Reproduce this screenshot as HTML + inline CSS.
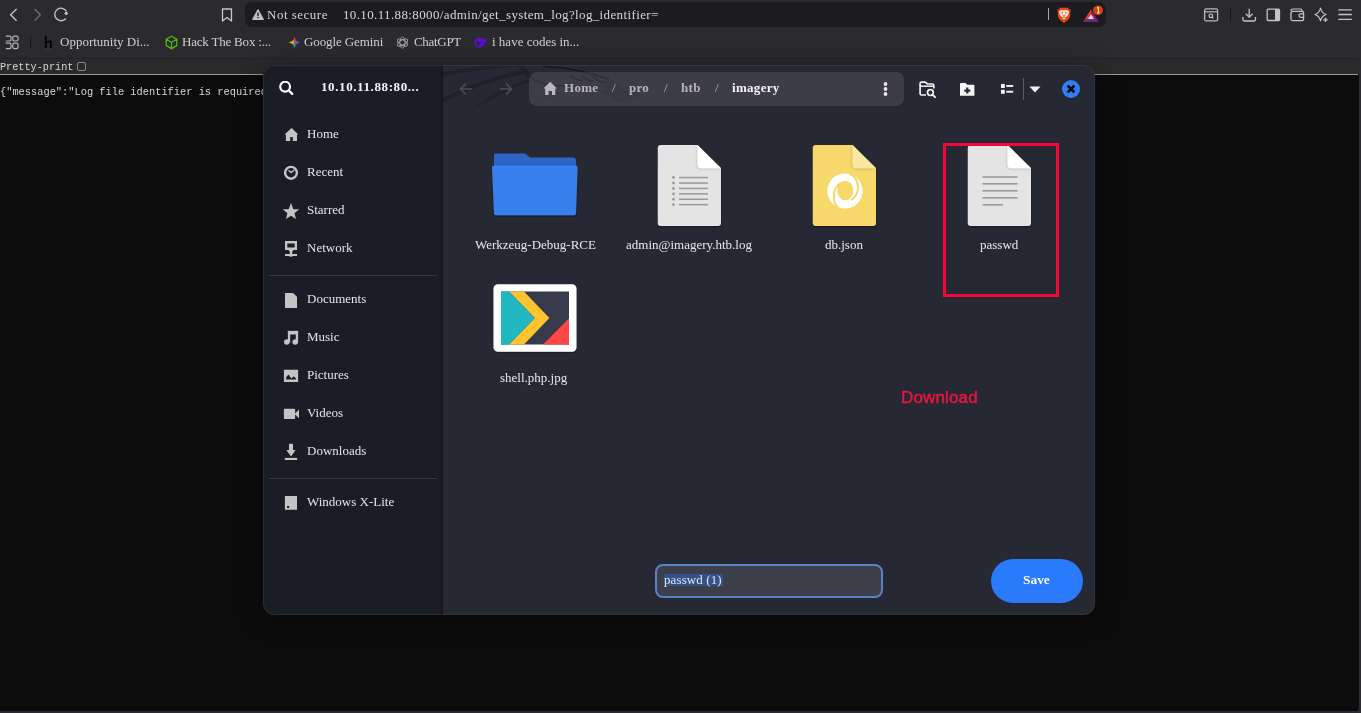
<!DOCTYPE html>
<html><head><meta charset="utf-8">
<style>
*{margin:0;padding:0;box-sizing:border-box}
body{-webkit-font-smoothing:antialiased}
.a{will-change:transform}
html,body{width:1361px;height:713px;overflow:hidden;background:#2b2a2f;font-family:"Liberation Serif",serif}
.a{position:absolute;white-space:nowrap}
#chrome{position:absolute;left:0;top:0;width:1361px;height:58px;background:#2b2a2f}
#url{position:absolute;left:245px;top:2px;width:861px;height:25px;background:#1c1b1f;border-radius:7px}
.t{color:#d4d4d6;font-size:13px;line-height:1}
#page{position:absolute;left:0;top:58px;width:1359px;height:653px;background:#0c0c0c;border-radius:0 3px 3px 0}
#pp{position:absolute;left:0;top:58px;width:1359px;height:16px;background:#2a2a2a;border-top:1px solid #232227;border-radius:0 3px 0 0}
#ppline{position:absolute;left:0;top:74px;width:1358px;height:1px;background:#9a9a9a}
.bm{color:#d0d0d2}
.mono{font-family:"Liberation Mono",monospace;color:#e6e6e6}
#dlg{position:absolute;left:263px;top:65px;width:832px;height:550px;border-radius:12px;overflow:hidden;background:#262833;box-shadow:0 2px 24px rgba(0,0,0,0.35)}
#dlgb{position:absolute;left:263px;top:65px;width:832px;height:550px;border-radius:12px;box-shadow:inset 0 0 0 1px rgba(255,255,255,0.07);pointer-events:none}
#side{position:absolute;left:0;top:0;width:180px;height:550px;background:#1a1d25}
.si{color:#e4e4e6;font-size:13px}
.bc{font-size:13px;font-weight:700;color:#b5b5ba;line-height:13px;letter-spacing:0.3px}
.fl{color:#e8e8ea;font-size:13px;line-height:13px}
</style></head><body>
<div id="chrome">
  <!-- nav icons -->
  <svg class="a" style="left:0;top:0" width="80" height="30" viewBox="0 0 80 30">
    <path d="M16.6 8.9 L10.6 14.8 L16.6 20.8" fill="none" stroke="#c6c6ca" stroke-width="1.35"/>
    <path d="M34.5 8.9 L40.4 14.8 L34.5 20.8" fill="none" stroke="#6c6c70" stroke-width="1.35"/>
    <path d="M65.9 18.5 A6.3 6.3 0 1 1 66.5 11.3" fill="none" stroke="#c6c6ca" stroke-width="1.3"/>
    <circle cx="66.2" cy="13.3" r="1.6" fill="#c6c6ca"/>
  </svg>
  <svg class="a" style="left:221px;top:8px" width="12" height="14" viewBox="0 0 12 14">
    <path d="M1.5 1 H10.5 V13 L6 9.5 L1.5 13 Z" fill="none" stroke="#c8c8cc" stroke-width="1.3" stroke-linejoin="round"/>
  </svg>
  <div id="url"></div>
  <svg class="a" style="left:252px;top:9px" width="12" height="11" viewBox="0 0 12 11">
    <path d="M6 0.5 L11.5 10.5 H0.5 Z" fill="#c0c0c4" stroke="#c0c0c4" stroke-linejoin="round"/>
    <rect x="5.3" y="3.5" width="1.4" height="3.6" fill="#1c1b1f"/><rect x="5.3" y="8" width="1.4" height="1.3" fill="#1c1b1f"/>
  </svg>
  <div class="a t" style="left:267px;top:8px;letter-spacing:0.5px">Not secure</div>
  <div class="a t" style="left:343px;top:8px;color:#d8d8da;letter-spacing:0.37px">10.10.11.88:8000/admin/get_system_log?log_identifier=</div>

  <div class="a" style="left:1048px;top:8px;width:1px;height:12px;background:#a8a8ac"></div>
  <svg class="a" style="left:1054px;top:5px" width="20" height="20" viewBox="1054 5 20 20">
    <path d="M1060.2 7.8 H1067.8 L1069.2 9.2 L1070.6 9.6 L1070 16.5 Q1069.6 18.6 1067.5 20.3 L1064 23 L1060.5 20.3 Q1058.4 18.6 1058 16.5 L1057.5 9.6 L1058.8 9.2 Z" fill="#e8470e"/>
    <path d="M1059 11.5 L1060.8 10.3 H1067.2 L1069.1 11.5 L1068.6 13.6 L1067.6 15.6 L1066.2 17.3 H1061.8 L1060.4 15.6 L1059.4 13.6 Z" fill="#ebe6e4"/>
    <ellipse cx="1064" cy="18.5" rx="1.6" ry="0.8" fill="#ebe6e4"/>
    <circle cx="1062.3" cy="12.6" r="0.9" fill="#e06a3a"/><circle cx="1065.8" cy="12.6" r="0.9" fill="#e06a3a"/>
    <path d="M1062.8 14.6 L1064 16.6 L1065.2 14.6" fill="none" stroke="#e06a3a" stroke-width="1"/>
  </svg>
  <svg class="a" style="left:1083px;top:9px" width="16" height="13" viewBox="0 0 16 13">
    <path d="M8 0.5 L15.5 12.5 H0.5 Z" fill="#9e1f63"/>
    <path d="M8 0.5 L0.5 12.5 H4 L8 5 Z" fill="#e0431d"/>
    <path d="M0.5 12.5 H15.5 L14 10 H2 Z" fill="#662d91"/>
    <path d="M8 5.2 L11 10 H5 Z" fill="#dcdcdc"/>
  </svg>
  <svg class="a" style="left:1093px;top:5px" width="10" height="11" viewBox="0 0 10 11">
    <circle cx="5" cy="5.3" r="4.9" fill="#d8440e"/>
    <path d="M4 3 L5.4 2.4 V8 M4 8 H6.6" stroke="#f4e4dc" stroke-width="1.1" fill="none"/>
  </svg>
  <svg class="a" style="left:1203px;top:8px" width="16" height="14" viewBox="0 0 16 14">
    <rect x="1.6" y="0.9" width="13" height="12" rx="1.5" fill="none" stroke="#b8b8bc" stroke-width="1.3"/>
    <path d="M1.6 3.8 H14.6" stroke="#b8b8bc" stroke-width="1.2"/>
    <circle cx="7.8" cy="7.8" r="1.8" fill="none" stroke="#d0d0d4" stroke-width="1.1"/>
    <path d="M9.1 9.1 L10.4 10.4" stroke="#d0d0d4" stroke-width="1.2"/>
  </svg>
  <div class="a" style="left:1230px;top:9px;width:1px;height:12px;background:#18171a"></div>
  <svg class="a" style="left:1242px;top:8px" width="15" height="14" viewBox="0 0 15 14">
    <path d="M7.2 0.8 V9 M3.8 5.8 L7.2 9.2 L10.6 5.8" fill="none" stroke="#c4c4c8" stroke-width="1.3"/>
    <path d="M0.9 9 V11.5 Q0.9 13 2.4 13 H12 Q13.5 13 13.5 11.5 V9" fill="none" stroke="#c4c4c8" stroke-width="1.3"/>
  </svg>
  <svg class="a" style="left:1266px;top:8px" width="15" height="14" viewBox="0 0 15 14">
    <rect x="1.2" y="1.2" width="12.3" height="11.3" rx="1" fill="none" stroke="#c4c4c8" stroke-width="1.3"/>
    <rect x="9" y="1.2" width="4.5" height="11.3" fill="#c4c4c8"/>
  </svg>
  <svg class="a" style="left:1290px;top:8px" width="15" height="14" viewBox="0 0 15 14">
    <path d="M1 3 Q1 1 3 1 H10.5 Q12 1 12 2.5 V3.5" fill="none" stroke="#c4c4c8" stroke-width="1.2"/>
    <rect x="1" y="3.3" width="12.6" height="9.3" rx="1.6" fill="none" stroke="#c4c4c8" stroke-width="1.3"/>
    <path d="M13.6 5.8 H10.6 Q9 5.8 9 7.6 Q9 9.4 10.6 9.4 H13.6" fill="none" stroke="#c4c4c8" stroke-width="1.2"/>
  </svg>
  <svg class="a" style="left:1314px;top:7px" width="15" height="16" viewBox="0 0 15 16">
    <path d="M6.5 1 Q7.5 6 12 7.5 Q7.5 9 6.5 14 Q5.5 9 1 7.5 Q5.5 6 6.5 1 Z" fill="none" stroke="#c4c4c8" stroke-width="1.2" stroke-linejoin="round"/>
    <path d="M11.5 10.5 V15 M9.3 12.8 H13.7" stroke="#c4c4c8" stroke-width="1.3"/>
  </svg>
  <svg class="a" style="left:1338px;top:8px" width="15" height="13" viewBox="0 0 15 13">
    <path d="M0.3 1.8 H13.8 M0.3 6.5 H13.8 M0.3 11.3 H13.8" stroke="#c4c4c8" stroke-width="1.3"/>
  </svg>
  <!-- bookmarks -->
  <svg class="a" style="left:5px;top:35px" width="14" height="15" viewBox="0 0 14 15">
    <path d="M0.8 1.2 H4.8 Q6 1.2 6 2.7 V4.5 Q6 6 4.8 6 H0.8 M7.8 2.6 Q7.8 1.2 9.2 1.2 H11.6 Q13 1.2 13 2.6 V4.6 Q13 6 11.6 6 H9.2 Q7.8 6 7.8 4.6 Z M0.8 8.2 H4.8 Q6 8.2 6 9.8 V12 Q6 13.6 4.6 13.6 H0.8 M7.8 9.8 Q7.8 8.2 9.4 8.2 H11.4 Q13 8.2 13 9.8 V12 Q13 13.6 11.4 13.6 H9.4 Q7.8 13.6 7.8 12 Z" fill="none" stroke="#b4b4b8" stroke-width="1.2"/>
  </svg>
  <div class="a" style="left:30px;top:37px;width:1px;height:11px;background:#151417"></div>
  <svg class="a" style="left:44px;top:35px" width="10" height="15" viewBox="0 0 10 15">
    <rect x="0.8" y="1" width="2" height="13" fill="#050505"/>
    <path d="M2.8 6.8 Q3.6 5.6 5 5.6 L5 7.4 Q3.8 7.4 2.8 8.2 Z" fill="#050505"/>
    <path d="M5 5.8 L6.6 5.2 H7.7 V14 H5.9 V7.2 L5 7.6 Z" fill="#050505"/>
    <rect x="0.5" y="13.6" width="2.6" height="0.8" fill="#5a5a5a"/><rect x="5.3" y="13.6" width="2.8" height="0.8" fill="#5a5a5a"/>
  </svg>
  <div class="a t bm" style="left:60px;top:35px">Opportunity Di...</div>
  <svg class="a" style="left:165px;top:35px" width="13" height="15" viewBox="0 0 13 15">
    <path d="M6.5 1.2 L11.8 4.2 V10.6 L6.5 13.6 L1.2 10.6 V4.2 Z M1.2 4.2 L6.5 7.3 L11.8 4.2 M6.5 7.3 V13.6" fill="none" stroke="#4cbc0c" stroke-width="1.3" stroke-linejoin="round"/>
  </svg>
  <div class="a t bm" style="left:182px;top:35px;letter-spacing:-0.2px">Hack The Box :...</div>
  <div class="a" style="left:288px;top:36px;width:13px;height:13px;background:conic-gradient(from 0deg at 50% 50%, #e8343c 0deg, #8a3fd0 60deg, #4a5ee8 100deg, #3a62d8 150deg, #1fae55 180deg, #6db830 230deg, #e8b818 270deg, #f08a20 310deg, #e8343c 360deg);clip-path:path('M6.5 0.3 Q7.2 5.6 12.4 6.4 Q7.2 7.2 6.5 12.5 Q5.8 7.2 0.6 6.4 Q5.8 5.6 6.5 0.3 Z')"></div>
  <div class="a t bm" style="left:304px;top:35px;letter-spacing:-0.1px">Google Gemini</div>
  <svg class="a" style="left:396px;top:36px" width="13" height="13" viewBox="0 0 13 13">
    <g fill="none" stroke="#a4a4a8" stroke-width="0.9">
      <ellipse cx="6.5" cy="6.5" rx="2.6" ry="5.6"/><ellipse cx="6.5" cy="6.5" rx="2.6" ry="5.6" transform="rotate(60 6.5 6.5)"/><ellipse cx="6.5" cy="6.5" rx="2.6" ry="5.6" transform="rotate(120 6.5 6.5)"/>
    </g>
  </svg>
  <div class="a t bm" style="left:414px;top:35px;letter-spacing:-0.3px">ChatGPT</div>
  <svg class="a" style="left:470px;top:33px" width="22" height="19" viewBox="470 33 22 19">
    <ellipse cx="479.4" cy="42.6" rx="5.4" ry="5.1" fill="#5511cc"/>
    <path d="M481 41 L482.6 37.6 L484.3 39.6 L487.2 38.4 L485.2 42.5 L483 45 Z" fill="#5511cc"/>
    <path d="M476.2 42 Q 477.2 40.3 478.8 41.4 L481 44.8 Q 478.8 46.2 476.8 45.2 Z" fill="#2b2a2f"/>
    <circle cx="481.6" cy="42.4" r="0.65" fill="#2b2a2f"/>
  </svg>
  <div class="a t bm" style="left:492px;top:35px">i have codes in...</div>
</div>
<div id="page"></div><div id="pp"></div>
<div id="ppline"></div>
<div class="a mono" style="left:0;top:62px;font-size:10.2px;color:#d6d6d6">Pretty-print</div>
<div class="a" style="left:77px;top:62px;width:9px;height:9px;border:1px solid #8a8a8a;border-radius:2px"></div>
<div class="a mono" style="left:0;top:86px;font-size:10.35px;color:#d8d8d8">{"message":"Log file identifier is required"}</div>


<div id="dlg">
  <div id="side"></div>
  <div style="position:absolute;left:178px;top:0;width:2px;height:550px;background:#15161b"></div>
  <svg style="position:absolute;left:180px;top:0" width="652" height="60" viewBox="0 0 652 60">
    <path d="M-2 9.5 Q 35 2, 78 -1" fill="none" stroke="#20222a" stroke-width="4"/>
    <path d="M-2 36 Q 38 16, 80 6.5" fill="none" stroke="#1f2129" stroke-width="4"/>
    <defs><linearGradient id="bg3" gradientUnits="userSpaceOnUse" x1="20" y1="48" x2="86" y2="15"><stop offset="0" stop-color="#20222a" stop-opacity="0"/><stop offset="0.35" stop-color="#20222a" stop-opacity="0.8"/><stop offset="1" stop-color="#20222a"/></linearGradient></defs>
    <path d="M20 50 Q 52 29, 86 15" fill="none" stroke="url(#bg3)" stroke-width="3.6"/>
    <path d="M76 -2 L 87 12" fill="none" stroke="#1f2129" stroke-width="5"/>
    <path d="M100 1.2 Q 135 3, 166 14.3" fill="none" stroke="#17181e" stroke-width="1.6"/>
    <path d="M86.4 10.8 Q 96 21, 121 21" fill="none" stroke="#1a1b21" stroke-width="1.4"/>
    <path d="M127.6 10.2 Q 130 14.5, 139.4 15.5 M139.4 10.2 Q 142 15, 150 16.6 M150 10.8 Q 153 16, 161.7 17.8" fill="none" stroke="#1a1b21" stroke-width="1.5"/>
    <path d="M162 13 Q 170 16, 176 21 L 181 25 L 195 27.5 L 199 30.5 L 190 34 L 176 37 Q 168 31, 158 28 Q 164 22, 162 13 Z" fill="#1c1d24" opacity="0.38"/>
    <path d="M94.6 37.8 Q 105 32, 118 27" fill="none" stroke="#1e2027" stroke-width="1.2" opacity="0.6"/>
  </svg>
  <div style="position:absolute;left:266px;top:7px;width:375px;height:34px;border-radius:8px;background:rgba(255,255,255,0.1)"></div>

</div>

<div id="dlgb"></div>
<!-- header -->
<svg class="a" style="left:459px;top:82px" width="56" height="14" viewBox="0 0 56 14">
  <path d="M7 1.5 L1.5 7 L7 12.5 M1.5 7 H13" fill="none" stroke="#4d4f58" stroke-width="1.6"/>
  <path d="M47 1.5 L52.5 7 L47 12.5 M52.5 7 H41" fill="none" stroke="#4d4f58" stroke-width="1.6"/>
</svg>
<svg class="a" style="left:543px;top:81px" width="15" height="15" viewBox="0 0 15 15">
  <path d="M7.2 0.8 L14 7.5 H12.3 V14 H9 V10 H5.5 V14 H2.2 V7.5 H0.5 Z" fill="#b9b9bd"/>
</svg>
<div class="a bc" style="left:564px;top:81px">Home</div>
<div class="a bc" style="left:612px;top:81px;font-weight:400">/</div>
<div class="a bc" style="left:629px;top:81px">pro</div>
<div class="a bc" style="left:664px;top:81px;font-weight:400">/</div>
<div class="a bc" style="left:681px;top:81px">htb</div>
<div class="a bc" style="left:715px;top:81px;font-weight:400">/</div>
<div class="a bc" style="left:732px;top:81px;color:#f6f6f8">imagery</div>
<svg class="a" style="left:882px;top:82px" width="8" height="14" viewBox="0 0 8 14">
  <circle cx="3.5" cy="2" r="1.9" fill="#e8e8ea"/><circle cx="3.5" cy="7" r="1.9" fill="#e8e8ea"/><circle cx="3.5" cy="12" r="1.9" fill="#e8e8ea"/>
</svg>
<svg class="a" style="left:919px;top:81px" width="18" height="17" viewBox="0 0 18 17">
  <path d="M7 14 H2.6 Q1.1 14 1.1 12.5 V2.6 Q1.1 1.1 2.6 1.1 H5.6 Q6.6 1.1 7.3 1.9 L8.2 3 H13.2 Q14.8 3 14.8 4.6 V7.4" fill="none" stroke="#f2f2f4" stroke-width="1.7" stroke-linejoin="round"/>
  <path d="M1.1 5.2 H14.8" stroke="#f2f2f4" stroke-width="1.5"/>
  <circle cx="11.4" cy="11.6" r="2.9" fill="none" stroke="#f2f2f4" stroke-width="1.7"/>
  <path d="M13.5 13.7 L16 16.2" stroke="#f2f2f4" stroke-width="1.9" stroke-linecap="round"/>
</svg>
<svg class="a" style="left:960px;top:83px" width="15" height="13" viewBox="0 0 15 13">
  <path d="M0 1 Q0 0 1 0 H5.6 L7.2 1.7 H13.6 Q14.4 1.7 14.4 2.5 V12.8 H0 Z" fill="#f4f4f6"/>
  <path d="M7.3 4.6 V10.6 M4.3 7.6 H10.3" stroke="#262833" stroke-width="2.1"/>
</svg>
<svg class="a" style="left:1000px;top:83px" width="14" height="12" viewBox="0 0 14 12">
  <rect x="1" y="1" width="3.8" height="4" fill="#f2f2f4"/><rect x="6.3" y="2" width="6.9" height="1.9" fill="#f2f2f4"/>
  <rect x="1" y="6.8" width="3.8" height="4" fill="#f2f2f4"/><rect x="6.3" y="7.8" width="6.9" height="1.9" fill="#f2f2f4"/>
</svg>
<div class="a" style="left:1023px;top:78px;width:1px;height:22px;background:#5a5c66"></div>
<svg class="a" style="left:1029px;top:86px" width="12" height="7" viewBox="0 0 12 7">
  <path d="M0.5 0.5 H11.5 L6 6.5 Z" fill="#f0f0f2"/>
</svg>
<svg class="a" style="left:1062px;top:80px" width="18" height="18" viewBox="0 0 18 18">
  <circle cx="9" cy="9" r="9" fill="#2f7ef5"/>
  <path d="M5.6 5.6 L12.4 12.4 M12.4 5.6 L5.6 12.4" stroke="#050508" stroke-width="2.6"/>
</svg>

<!-- files -->
<svg class="a" style="left:491px;top:153px" width="88" height="64" viewBox="0 0 88 64">
  <defs><filter id="sh" x="-10%" y="-10%" width="120%" height="130%"><feDropShadow dx="0" dy="1" stdDeviation="0.8" flood-color="#000" flood-opacity="0.45"/></filter><filter id="sh2" x="-30%" y="-30%" width="160%" height="160%"><feDropShadow dx="-0.5" dy="0.8" stdDeviation="0.9" flood-color="#000" flood-opacity="0.18"/></filter></defs>
  <path d="M3 1.5 Q3 0.5 4 0.5 H34 L39 4.5 H82 Q85 4.5 85 7.5 V20 H3 Z" fill="#2c65c6"/>
  <path d="M1 14.5 Q1 12.5 3 12.5 H84.5 Q86.8 12.5 86.6 14.8 L85 60.5 Q84.9 62.3 83 62.3 H5 Q3.1 62.3 3 60.5 Z" fill="#3780ee" filter="url(#sh)"/>
</svg>
<svg class="a" style="left:657px;top:144px" width="66" height="84" viewBox="0 0 66 84">
  <path d="M3.8 1 H40.5 L64 24.3 V78.8 Q64 82 60.8 82 H3.8 Q0.8 82 0.8 78.8 V4.2 Q0.8 1 3.8 1 Z" fill="#e4e4e4" filter="url(#sh)"/>
  <path d="M40.5 1 L64 24.3 H44 Q40.5 24.3 40.5 20.8 Z" fill="#ffffff" filter="url(#sh2)"/>
  <g fill="#9a9a9a">
    <circle cx="16.5" cy="33.5" r="1.4"/><circle cx="16.5" cy="39" r="1.4"/><circle cx="16.5" cy="44.4" r="1.4"/><circle cx="16.5" cy="49.8" r="1.4"/><circle cx="16.5" cy="55.2" r="1.4"/><circle cx="16.5" cy="60.6" r="1.4"/>
    <rect x="22" y="32.8" width="29" height="1.5"/><rect x="22" y="38.3" width="29" height="1.5"/><rect x="22" y="43.7" width="29" height="1.5"/><rect x="22" y="49.1" width="29" height="1.5"/><rect x="22" y="54.5" width="29" height="1.5"/><rect x="22" y="59.9" width="29" height="1.5"/>
  </g>
</svg>
<svg class="a" style="left:812px;top:144px" width="66" height="84" viewBox="0 0 66 84">
  <path d="M3.8 1 H40.5 L64 24.3 V78.8 Q64 82 60.8 82 H3.8 Q0.8 82 0.8 78.8 V4.2 Q0.8 1 3.8 1 Z" fill="#f6d96a" filter="url(#sh)"/>
  <path d="M40.5 1 L64 24.3 H44 Q40.5 24.3 40.5 20.8 Z" fill="#f9e7a2" filter="url(#sh2)"/>
  <circle cx="33" cy="47" r="17.6" fill="#ffffff"/>
    <ellipse cx="33.2" cy="46.5" rx="8" ry="9.8" fill="#f6d96a"/>
    <path d="M37.5 30 C 48 34, 49 50, 39 56" fill="none" stroke="#f6d96a" stroke-width="2"/>
    <path d="M29 38.5 C 20 44, 20 58, 26.5 64" fill="none" stroke="#f6d96a" stroke-width="2"/>
</svg>
<svg class="a" style="left:967px;top:144px" width="66" height="84" viewBox="0 0 66 84">
  <path d="M3.8 1 H40.5 L64 24.3 V78.8 Q64 82 60.8 82 H3.8 Q0.8 82 0.8 78.8 V4.2 Q0.8 1 3.8 1 Z" fill="#e4e4e4" filter="url(#sh)"/>
  <path d="M40.5 1 L64 24.3 H44 Q40.5 24.3 40.5 20.8 Z" fill="#ffffff" filter="url(#sh2)"/>
  <g fill="#9a9a9a">
    <rect x="15.5" y="32.2" width="35" height="1.6"/><rect x="15.5" y="39" width="35" height="1.6"/><rect x="15.5" y="46" width="35" height="1.6"/><rect x="15.5" y="53" width="35" height="1.6"/><rect x="15.5" y="60" width="20.5" height="1.6"/>
  </g>
</svg>
<div class="a" style="left:943px;top:143px;width:116px;height:154px;border:3px solid #f5073a"></div>
<svg class="a" style="left:493px;top:284px" width="84" height="69" viewBox="0 0 84 69">
  <rect x="0.5" y="0.3" width="83" height="67.5" rx="4.5" fill="#ffffff" filter="url(#sh)"/>
  <rect x="8" y="7.5" width="68" height="53" fill="#363a4a"/>
  <path d="M16 7.5 H31 L56.4 34 L31 60.5 H16 L41.8 34 Z" fill="#fec42f"/>
  <path d="M8 7.5 H16 L41.8 34 L16 60.5 H8 Z" fill="#22b8c2"/>
  <path d="M50 60.5 L76 34.3 V60.5 Z" fill="#fd4546"/>
</svg>
<div class="a fl" style="left:475px;top:238px">Werkzeug-Debug-RCE</div>
<div class="a fl" style="left:626px;top:238px">admin@imagery.htb.log</div>
<div class="a fl" style="left:825px;top:238px">db.json</div>
<div class="a fl" style="left:980px;top:238px">passwd</div>
<div class="a fl" style="left:500px;top:371px">shell.php.jpg</div>
<div class="a" style="left:901px;top:389px;font-family:'Liberation Sans',sans-serif;font-size:17px;color:#ec1540;line-height:17px;-webkit-text-stroke:0.45px #ec1540;letter-spacing:0.15px">Download</div>
<!-- input -->
<div class="a" style="left:655px;top:564px;width:228px;height:34px;border:2px solid #5c82c6;border-radius:8px;background:#3c3e49"></div>
<div class="a" style="left:664px;top:574px;width:59px;height:12px;background:#34528a"></div>
<div class="a fl" style="left:664px;top:573px;color:#e6e6e8;letter-spacing:0.1px">passwd (1)</div>
<div class="a" style="left:991px;top:559px;width:92px;height:44px;border-radius:22px;background:#2a7afc"></div>
<div class="a" style="left:1023px;top:573px;font-size:13.4px;font-weight:700;color:#fff;line-height:13px">Save</div>
<!-- sidebar header -->
<svg class="a" style="left:279px;top:81px" width="15" height="15" viewBox="0 0 15 15">
  <circle cx="6.1" cy="5.7" r="4.9" fill="none" stroke="#fff" stroke-width="2.1"/>
  <path d="M9.6 9.3 L13.2 12.9" stroke="#fff" stroke-width="2.3" stroke-linecap="round"/>
</svg>
<div class="a" style="left:321px;top:80px;font-size:13px;font-weight:700;color:#f4f4f6;letter-spacing:0.6px;line-height:13px">10.10.11.88:80...</div>
<svg class="a" style="left:263px;top:65px" width="180" height="550" viewBox="263 65 180 550">
<g fill="#c4c4c6">
<path d="M291.6 127.9 L298.3 134.6 H297 V141 H292.8 V137 H290.2 V141 H285.9 V134.6 H284.5 Z"/>
<path d="M291 203 L293.3 209.2 L299.2 209.3 L294.5 213.2 L296 218.9 L291 215.8 L286 218.9 L287.4 213.2 L282.8 209.3 L288.7 209.2 Z"/>
<path d="M285 240.9 H297 V249.9 H285 Z M287.3 243.4 V247.6 H294.7 V243.4 Z" fill-rule="evenodd"/>
<path d="M288 249.5 H294 L292.3 251.6 V253.9 H297 V256.1 H292.3 V256.8 H289.7 V256.1 H285 V253.9 H289.7 V251.6 Z"/>
<path d="M285 292.9 H293 L297 296.7 V307.9 H285 Z"/>
<rect x="287.9" y="330.9" width="10.2" height="3.6"/><rect x="287.9" y="330.9" width="2.3" height="11.5"/><rect x="295.8" y="330.9" width="2.3" height="11.5"/><circle cx="286.8" cy="342.1" r="2.75"/><circle cx="295.2" cy="342.1" r="2.75"/>
<path d="M283.9 369.7 H298.1 V382 H283.9 Z M286.2 379.6 H295.9 V378.2 L293.7 376.3 L291.3 378.4 L288.5 374.6 L286.2 377.3 Z" fill-rule="evenodd"/>
<rect x="283.9" y="408.8" width="11.2" height="10.2" rx="0.8"/>
<path d="M294.6 413.9 L299 409.6 V418.2 Z"/>
<path d="M289 443.7 H293 V450 H295.6 L291 456.4 L286.4 450 H289 Z"/>
<rect x="284.8" y="457.9" width="12.3" height="2.1"/>
<path d="M284.9 495.9 H297 V509.8 H284.9 Z M287.1 506 V507.9 H289.1 V506 Z" fill-rule="evenodd"/>
</g>
<circle cx="291" cy="172.8" r="5.9" fill="none" stroke="#c4c4c6" stroke-width="2.4"/>
<path d="M289 170.8 L291.2 172.6 L293.8 170.2" fill="none" stroke="#c4c4c6" stroke-width="1.4" stroke-linecap="round"/>
</svg>
<div class="a si" style="left:307px;top:127px;line-height:13px">Home</div>
<div class="a si" style="left:307px;top:165px;line-height:13px">Recent</div>
<div class="a si" style="left:307px;top:203px;line-height:13px">Starred</div>
<div class="a si" style="left:307px;top:241px;line-height:13px">Network</div>
<div class="a si" style="left:307px;top:292px;line-height:13px">Documents</div>
<div class="a si" style="left:307px;top:330px;line-height:13px">Music</div>
<div class="a si" style="left:307px;top:368px;line-height:13px">Pictures</div>
<div class="a si" style="left:307px;top:406px;line-height:13px">Videos</div>
<div class="a si" style="left:307px;top:444px;line-height:13px">Downloads</div>
<div class="a si" style="left:307px;top:495px;line-height:13px">Windows X-Lite</div>
<div class="a" style="left:269px;top:275px;width:168px;height:1px;background:#33363e"></div>
<div class="a" style="left:269px;top:478px;width:168px;height:1px;background:#33363e"></div>

</body></html>
